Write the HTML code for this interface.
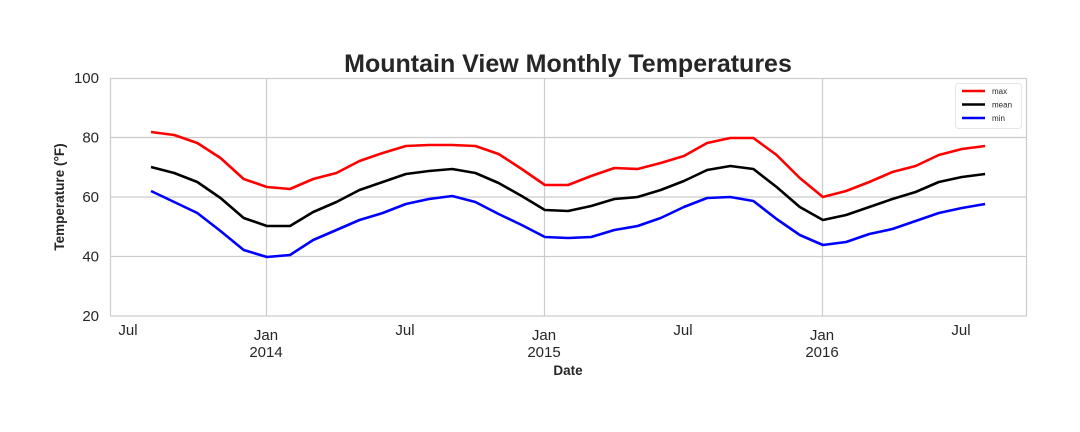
<!DOCTYPE html>
<html><head><meta charset="utf-8"><style>
html,body{margin:0;padding:0;background:#fff;}
svg{display:block;font-family:"Liberation Sans",Arial,sans-serif;}
</style></head><body>
<svg width="1080" height="432" viewBox="0 0 1080 432" xmlns="http://www.w3.org/2000/svg">
<rect width="1080" height="432" fill="#fff"/>
<g stroke="#cccccc" stroke-width="1.2">
<line x1="110" y1="137.5" x2="1026" y2="137.5"/>
<line x1="110" y1="197" x2="1026" y2="197"/>
<line x1="110" y1="256.5" x2="1026" y2="256.5"/>
<line x1="266.5" y1="78" x2="266.5" y2="316"/>
<line x1="544.5" y1="78" x2="544.5" y2="316"/>
<line x1="822.5" y1="78" x2="822.5" y2="316"/>
</g>
<rect x="110.5" y="78.5" width="916" height="237.5" fill="none" stroke="#cccccc" stroke-width="1.2"/>
<g fill="none" stroke-width="2.6" stroke-linejoin="round">
<polyline stroke="#ff0000" points="151,132 174.2,135 197.3,143 220.5,158 243.7,179 266.9,187 290,189 313.2,179 336.4,173 359.5,161 382.7,153 405.9,146 429,145 452.2,145 475.4,146 498.6,154 521.7,169 544.9,185 568.1,185 591.2,176 614.4,168 637.6,169 660.7,163 683.9,156 707.1,143 730.3,138 753.4,138 776.6,155 799.8,178 822.9,197 846.1,191 869.3,182 892.4,172 915.6,166 938.8,155 961.9,149 985.1,146"/>
<polyline stroke="#000000" points="151,167 174.2,173 197.3,182 220.5,198 243.7,218 266.9,226 290,226 313.2,212 336.4,202 359.5,190 382.7,182 405.9,174 429,171 452.2,169 475.4,173 498.6,183 521.7,196 544.9,210 568.1,211 591.2,206 614.4,199 637.6,197 660.7,190 683.9,181 707.1,170 730.3,166 753.4,169 776.6,187 799.8,207 822.9,220 846.1,215 869.3,207 892.4,199 915.6,192 938.8,182 961.9,177 985.1,174"/>
<polyline stroke="#0000ff" points="151,191 174.2,202 197.3,213 220.5,231 243.7,250 266.9,257 290,255 313.2,240 336.4,230 359.5,220 382.7,213 405.9,204 429,199 452.2,196 475.4,202 498.6,214 521.7,225 544.9,237 568.1,238 591.2,237 614.4,230 637.6,226 660.7,218 683.9,207 707.1,198 730.3,197 753.4,201 776.6,219 799.8,235 822.9,245 846.1,242 869.3,234 892.4,229 915.6,221 938.8,213 961.9,208 985.1,204"/>
</g>
<rect x="955.5" y="83.5" width="66" height="45" rx="3" fill="#fff" fill-opacity="0.85" stroke="#e6e6e6"/>
<g stroke-width="2.6">
<line x1="962" y1="91" x2="985" y2="91" stroke="#ff0000"/>
<line x1="962" y1="104.5" x2="985" y2="104.5" stroke="#000"/>
<line x1="962" y1="118" x2="985" y2="118" stroke="#0000ff"/>
</g>
<g font-size="8" fill="#262626">
<text x="992" y="94">max</text>
<text x="992" y="107.5">mean</text>
<text x="992" y="121">min</text>
</g>
<text x="568" y="72" text-anchor="middle" font-size="25" font-weight="bold" fill="#262626">Mountain View Monthly Temperatures</text>
<g font-size="15" fill="#262626" text-anchor="end">
<text x="99" y="83">100</text>
<text x="99" y="142.5">80</text>
<text x="99" y="202">60</text>
<text x="99" y="261.5">40</text>
<text x="99" y="321">20</text>
</g>
<g font-size="15" fill="#262626" text-anchor="middle">
<text x="128" y="335">Jul</text>
<text x="266" y="340">Jan</text><text x="266" y="357">2014</text>
<text x="405" y="335">Jul</text>
<text x="544" y="340">Jan</text><text x="544" y="357">2015</text>
<text x="683" y="335">Jul</text>
<text x="822" y="340">Jan</text><text x="822" y="357">2016</text>
<text x="961" y="335">Jul</text>
</g>
<text x="568" y="375" text-anchor="middle" font-size="13.5" font-weight="bold" fill="#262626">Date</text>
<text transform="translate(64,197) rotate(-90)" text-anchor="middle" font-size="13.5" font-weight="bold" fill="#262626">Temperature (°F)</text>
</svg>
</body></html>
